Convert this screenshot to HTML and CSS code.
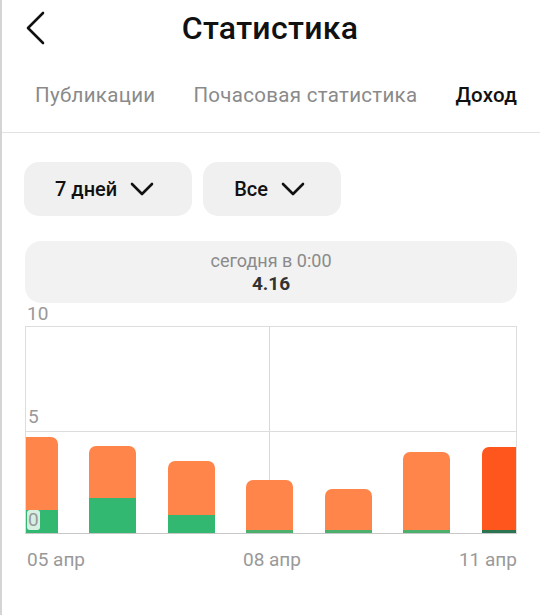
FILE: index.html
```html
<!DOCTYPE html>
<html lang="ru">
<head>
    <meta charset="UTF-8">
    <meta name="viewport" content="width=device-width, initial-scale=1.0">
    <title>Статистика</title>
    <link rel="stylesheet" href="styles.css">
</head>
<body>
<div class="page">
    <div class="top-bar">
        <a class="back" href="#">
            <svg width="20" height="34" viewBox="0 0 20 34"><path d="M17 2 L2 17 L17 32" fill="none" stroke="#111" stroke-width="2.6" stroke-linecap="round" stroke-linejoin="round"/></svg>
        </a>
        <h1 class="title">Статистика</h1>
        <span></span>
    </div>

    <div class="tabs">
        <span class="tab">Публикации</span>
        <span class="tab">Почасовая статистика</span>
        <span class="tab active">Доход</span>
    </div>

    <div class="filters">
        <button class="pill">7 дней
            <svg width="24" height="14" viewBox="0 0 24 14"><path d="M2 2 L12 12 L22 2" fill="none" stroke="#111" stroke-width="2.6" stroke-linecap="round" stroke-linejoin="round"/></svg>
        </button>
        <button class="pill">Все
            <svg width="24" height="14" viewBox="0 0 24 14"><path d="M2 2 L12 12 L22 2" fill="none" stroke="#111" stroke-width="2.6" stroke-linecap="round" stroke-linejoin="round"/></svg>
        </button>
    </div>

    <div class="summary">
        <div class="summary-time">сегодня в 0:00</div>
        <div class="summary-value">4.16</div>
    </div>

    <!-- график дохода -->
    <div class="chart">
        <div class="y-top">10</div>
        <div class="plot">
            <span class="y-label y-five">5</span>
            <span class="y-label y-zero">0</span>
            <div class="bars">
                <div class="bar" style="height: 96px"><div class="part-orange"></div><div class="part-green" style="height: 23px"></div></div>
                <div class="bar" style="height: 87px"><div class="part-orange"></div><div class="part-green" style="height: 35px"></div></div>
                <div class="bar" style="height: 72px"><div class="part-orange"></div><div class="part-green" style="height: 18px"></div></div>
                <div class="bar" style="height: 53px"><div class="part-orange"></div><div class="part-green thin"></div></div>
                <div class="bar" style="height: 44px"><div class="part-orange"></div><div class="part-green thin"></div></div>
                <div class="bar" style="height: 81px"><div class="part-orange"></div><div class="part-green thin"></div></div>
                <div class="bar today" style="height: 86px"><div class="part-orange"></div><div class="part-green thin"></div></div>
            </div>
        </div>
        <div class="dates">
            <span>05 апр</span>
            <span>08 апр</span>
            <span>11 апр</span>
        </div>
    </div>
</div>
</body>
</html>
```

FILE: styles.css
```css
body {
    margin: 0;
    background-color: #fff;
    font-family: Roboto, "Liberation Sans", Arial, sans-serif;
    color: #111;
}

.page {
    min-height: 615px;
    border-left: 2px solid #d4d4d4;
    box-sizing: border-box;
}

.top-bar {
    display: grid;
    grid-template-columns: 1fr auto 1fr;
    align-items: center;
    height: 55px;
    padding: 0 26px 0 24px;
}

.back {
    display: flex;
    align-items: center;
}

.title {
    margin: 0;
    font-size: 32px;
    font-weight: 500;
    letter-spacing: 0.3px;
}

.tabs {
    display: flex;
    align-items: center;
    gap: 38px;
    height: 78px;
    padding: 2px 0 0 33px;
    box-sizing: border-box;
    border-bottom: 1px solid #e2e2e2;
}

.tab {
    font-size: 20.5px;
    font-weight: 400;
    color: #8a8a8a;
    letter-spacing: 0.3px;
}

.tab.active {
    color: #111;
    font-weight: 500;
}

.filters {
    display: flex;
    gap: 11px;
    padding: 29px 0 0 22px;
}

.pill {
    display: flex;
    align-items: center;
    gap: 13px;
    height: 54px;
    padding: 0 36px 0 31px;
    border: none;
    border-radius: 15px;
    background-color: #f0f0f0;
    font-family: inherit;
    font-size: 20px;
    font-weight: 500;
    color: #111;
}

.pill:first-child {
    padding-right: 38px;
}

.summary {
    margin: 25px 23px 0 23px;
    height: 62px;
    border-radius: 16px;
    background-color: #f2f2f2;
    display: flex;
    flex-direction: column;
    align-items: center;
    justify-content: center;
    gap: 1px;
}

.summary-time {
    font-size: 18px;
    color: #8a8a8a;
}

.summary-value {
    font-size: 19px;
    font-weight: 700;
    color: #333;
}

.chart {
    padding: 0 23px;
}

.y-top {
    height: 23px;
    padding: 1px 0 0 2px;
    box-sizing: border-box;
    font-size: 19px;
    color: #999;
    line-height: 20px;
}

.plot {
    position: relative;
    height: 206px;
    border: 1px solid #dddddd;
    border-bottom-color: #c8c8c8;
    overflow: hidden;
    background:
        linear-gradient(#dddddd, #dddddd) no-repeat 0 104px / 100% 1px,
        linear-gradient(#d8d8d8, #d8d8d8) no-repeat 243px 0 / 1px 100%;
}

.y-label {
    position: absolute;
    left: 1px;
    z-index: 2;
    font-size: 19px;
    color: #999;
    line-height: 20px;
    padding: 0 1px;
}

.y-five {
    top: 80px;
}

.y-zero {
    bottom: 3px;
    background-color: rgba(255, 255, 255, 0.8);
    border-radius: 3px;
}

.bars {
    display: flex;
    align-items: flex-end;
    gap: 31.5px;
    height: 100%;
    margin-left: -15.5px;
}

.bar {
    flex: 0 0 47px;
    display: flex;
    flex-direction: column;
    border-radius: 7px 7px 0 0;
    overflow: hidden;
}

.part-orange {
    flex: 1;
    background-color: #ff854a;
}

.part-green {
    background-color: #33b872;
}

.part-green.thin {
    height: 3px;
    background-color: #4caf6c;
}

.bar.today .part-orange {
    background-color: #ff561e;
}

.bar.today .part-green {
    background-color: #2c7451;
}

.dates {
    display: flex;
    justify-content: space-between;
    padding: 14px 0 0 2px;
    font-size: 19px;
    color: #999;
}
```
